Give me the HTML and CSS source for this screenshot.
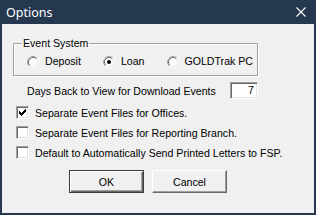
FILE: index.html
```html
<!DOCTYPE html>
<html lang="en">

<head>
   <meta charset="UTF-8" />
   <title>Options</title>
   <link rel="stylesheet" href="styles.css">
</head>

<body>
   <div class="window">
      <div class="titlebar">
         <span class="title">Options</span>
         <svg class="close" width="10" height="10" viewBox="0 0 10 10">
            <path d="M0.5 0.5 L9.5 9.5 M9.5 0.5 L0.5 9.5" stroke="#fff" stroke-width="1.1" />
         </svg>
      </div>

      <div class="content">
         <fieldset class="group">
            <legend>Event System</legend>
            <div class="radios">
               <label class="radio">
                  <svg width="12" height="12" viewBox="0 0 12 12">
                     <circle cx="6" cy="6" r="4.5" fill="#fff" />
                     <path d="M2.11 9.89 A5.5 5.5 0 0 1 9.89 2.11" stroke="#a0a0a0" fill="none" />
                     <path d="M9.89 2.11 A5.5 5.5 0 0 1 2.11 9.89" stroke="#fff" fill="none" />
                     <path d="M2.82 9.18 A4.5 4.5 0 0 1 9.18 2.82" stroke="#696969" fill="none" />
                     <path d="M9.18 2.82 A4.5 4.5 0 0 1 2.82 9.18" stroke="#e3e3e3" fill="none" />
                  </svg>
                  Deposit
               </label>
               <label class="radio">
                  <svg width="12" height="12" viewBox="0 0 12 12">
                     <circle cx="6" cy="6" r="4.5" fill="#fff" />
                     <path d="M2.11 9.89 A5.5 5.5 0 0 1 9.89 2.11" stroke="#a0a0a0" fill="none" />
                     <path d="M9.89 2.11 A5.5 5.5 0 0 1 2.11 9.89" stroke="#fff" fill="none" />
                     <path d="M2.82 9.18 A4.5 4.5 0 0 1 9.18 2.82" stroke="#696969" fill="none" />
                     <path d="M9.18 2.82 A4.5 4.5 0 0 1 2.82 9.18" stroke="#e3e3e3" fill="none" />
                     <circle cx="6" cy="6" r="2" fill="#000" />
                  </svg>
                  Loan
               </label>
               <label class="radio">
                  <svg width="12" height="12" viewBox="0 0 12 12">
                     <circle cx="6" cy="6" r="4.5" fill="#fff" />
                     <path d="M2.11 9.89 A5.5 5.5 0 0 1 9.89 2.11" stroke="#a0a0a0" fill="none" />
                     <path d="M9.89 2.11 A5.5 5.5 0 0 1 2.11 9.89" stroke="#fff" fill="none" />
                     <path d="M2.82 9.18 A4.5 4.5 0 0 1 9.18 2.82" stroke="#696969" fill="none" />
                     <path d="M9.18 2.82 A4.5 4.5 0 0 1 2.82 9.18" stroke="#e3e3e3" fill="none" />
                  </svg>
                  GOLDTrak PC
               </label>
            </div>
         </fieldset>

         <div class="days-row">
            <span>Days Back to View for Download Events</span>
            <span class="textbox">7</span>
         </div>

         <div class="check-list">
            <label class="check">
               <span class="check-box">
                  <svg width="11" height="11" viewBox="0 0 11 11" shape-rendering="crispEdges">
                     <path d="M2 4h1v3h-1z M3 5h1v3h-1z M4 6h1v3h-1z M5 5h1v3h-1z M6 4h1v3h-1z M7 3h1v3h-1z M8 2h1v3h-1z" fill="#000" />
                  </svg>
               </span>
               Separate Event Files for Offices.
            </label>
            <label class="check">
               <span class="check-box"></span>
               Separate Event Files for Reporting Branch.
            </label>
            <label class="check">
               <span class="check-box"></span>
               Default to Automatically Send Printed Letters to FSP.
            </label>
         </div>

         <div class="buttons">
            <button class="btn btn-default">OK</button>
            <button class="btn">Cancel</button>
         </div>
      </div>
   </div>
</body>

</html>
```

FILE: styles.css
```css
:root {
   --frame: #25384f;
   --face: #f0f0f0;
   --shadow: #a0a0a0;
   --dark: #696969;
   --light: #e3e3e3;
}

* {
   box-sizing: border-box;
   margin: 0;
   padding: 0;
}

body {
   font-family: 'Liberation Sans', Arial, sans-serif;
   font-size: 10.6px;
   color: #000;
   background: var(--face);
}

.window {
   width: 316px;
   height: 215px;
   border: 2px solid var(--frame);
   border-top: none;
   background: var(--face);
   display: flex;
   flex-direction: column;
}

.titlebar {
   height: 24px;
   margin: 0 -2px;
   background: var(--frame);
   display: flex;
   align-items: center;
   justify-content: space-between;
   padding: 0 10px 0 6px;
}

.title {
   font-family: 'Noto Sans', sans-serif;
   font-size: 12.5px;
   color: #fff;
}

.close {
   display: block;
}

.content {
   display: flex;
   flex-direction: column;
}

.group {
   margin: 13px 0 0 11px;
   width: 245px;
   height: 39px;
   border: 1px solid var(--shadow);
   box-shadow: inset 1px 1px #fff, 1px 1px #fff;
   padding: 0 0 0 13px;
}

.group legend {
   margin-left: -5px;
   padding: 0 1px;
   line-height: 13px;
}

.radios {
   display: flex;
   gap: 22px;
   margin-top: 5px;
   white-space: nowrap;
}

.radio {
   display: flex;
   align-items: center;
   gap: 6px;
   line-height: 13px;
}

.radio svg {
   display: block;
   flex-shrink: 0;
}

.days-row {
   display: flex;
   align-items: center;
   justify-content: space-between;
   margin: 6px 0 0 11px;
   width: 245px;
   padding-left: 14px;
}

.textbox {
   width: 28px;
   height: 17px;
   border: 1px solid;
   border-color: var(--shadow) #fff #fff var(--shadow);
   box-shadow: inset 1px 1px var(--dark), inset -1px -1px var(--light);
   background: #fff;
   text-align: right;
   padding: 1px 3px 0 0;
   line-height: 13px;
}

.check-list {
   display: flex;
   flex-direction: column;
   gap: 7px;
   margin: 7px 0 0 14px;
}

.check {
   display: flex;
   align-items: center;
   gap: 6px;
   height: 13px;
}

.check-box {
   width: 13px;
   height: 13px;
   border: 1px solid;
   border-color: var(--shadow) #fff #fff var(--shadow);
   box-shadow: inset 1px 1px var(--dark), inset -1px -1px var(--light);
   background: #fff;
}

.check-box svg {
   display: block;
}

.buttons {
   display: flex;
   gap: 8px;
   margin: 11px 0 0 67px;
}

.btn {
   width: 75px;
   height: 23px;
   font-family: inherit;
   font-size: 10.6px;
   color: #000;
   background: var(--face);
   border: 1px solid;
   border-color: #fff var(--dark) var(--dark) #fff;
   box-shadow: inset -1px -1px var(--shadow);
}

.btn-default {
   border-color: #3c3c3c;
   box-shadow: inset 1px 1px #fff, inset -1px -1px var(--dark), inset -2px -2px var(--shadow);
}
```
